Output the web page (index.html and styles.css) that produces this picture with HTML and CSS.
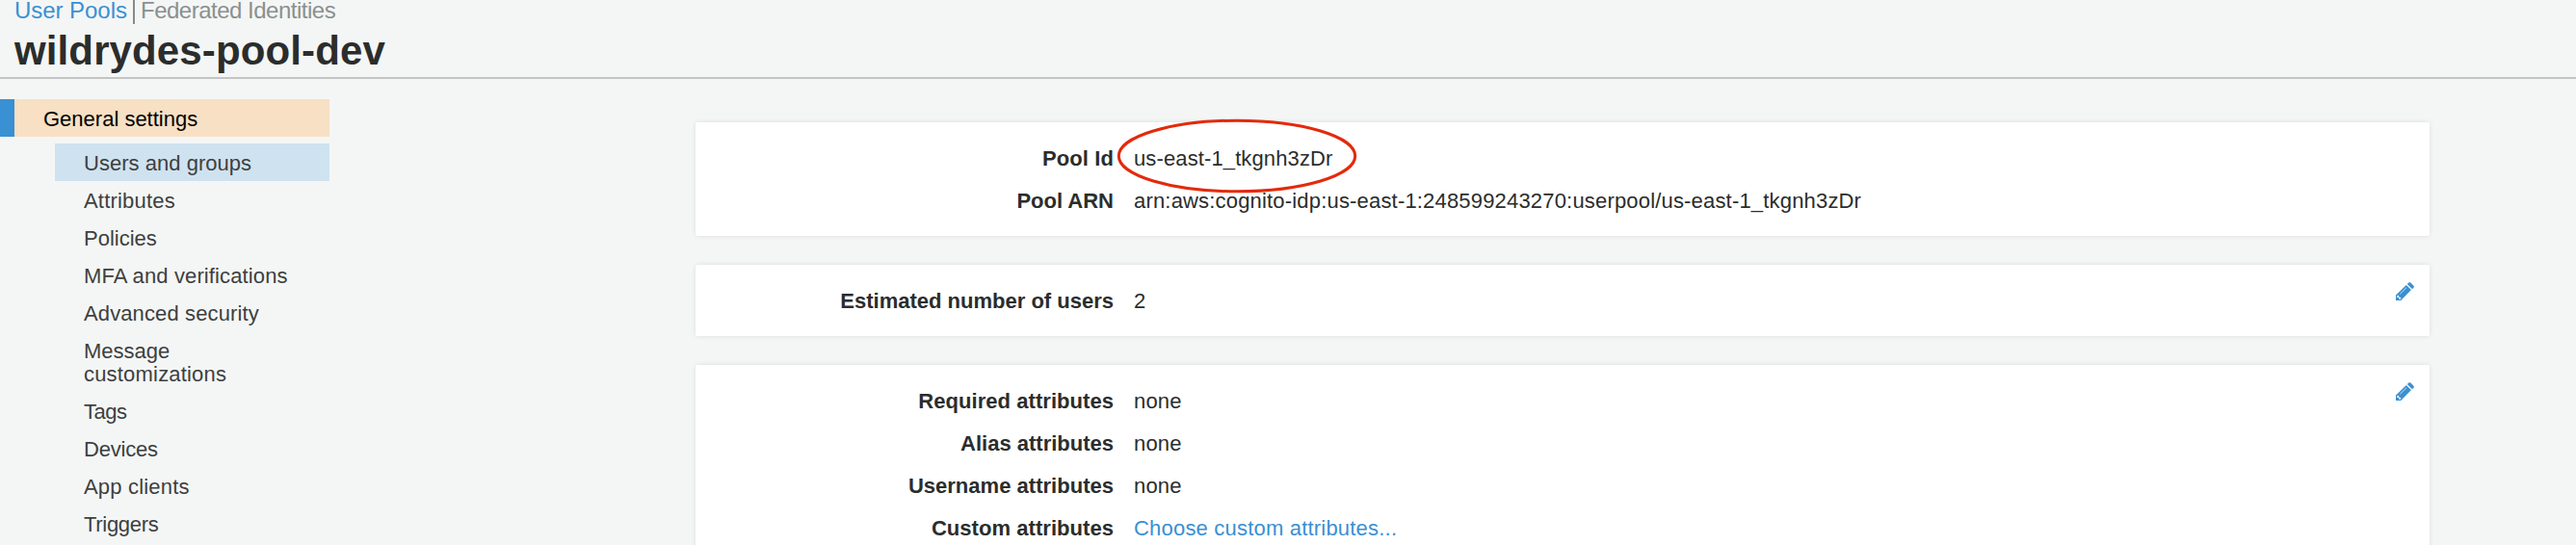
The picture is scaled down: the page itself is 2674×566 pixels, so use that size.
FILE: index.html
```
<!DOCTYPE html>
<html lang="en">
<head>
<meta charset="utf-8">
<title>wildrydes-pool-dev</title>
<link rel="stylesheet" href="styles.css">
</head>
<body>
<svg class="symbols" aria-hidden="true">
  <symbol id="pencil" viewBox="0 0 19 19">
    <path fill="currentColor" d="M0 19V13.600L10.800 2.900L16 8.100L5.200 19Z"/>
    <path fill="currentColor" d="M11.800 2L13.300.6Q14.300-.3 15.300.6L18.400 3.700Q19.300 4.700 18.400 5.700L17 7.200Z"/>
    <path fill="none" stroke="#fff" stroke-width=".7" d="M4.300 12.300L11 5.700"/>
    <path fill="#fff" d="M1.300 14.300L2.800 13.500L3.400 15.600L5.500 16.200L4.700 17.700H3.200V15.900H1.300Z"/>
  </symbol>
</svg>
<header class="header">
  <nav class="switcher">
    <a class="switch-link active">User Pools</a>
    <a class="switch-link other">Federated Identities</a>
  </nav>
  <h1 class="title">wildrydes-pool-dev</h1>
</header>
<div class="layout">
  <nav class="sidebar">
    <a class="section">General settings</a>
    <div class="items">
      <a class="item selected">Users and groups</a>
      <a class="item wide">Attributes</a>
      <a class="item">Policies</a>
      <a class="item medium">MFA and verifications</a>
      <a class="item medium">Advanced security</a>
      <a class="item message">Message <span class="wide">customizations</span></a>
      <a class="item tags">Tags</a>
      <a class="item tight">Devices</a>
      <a class="item wide">App clients</a>
      <a class="item triggers">Triggers</a>
    </div>
  </nav>
  <main class="content">
    <section class="card">
      <dl class="row"><dt class="label pool-id">Pool Id</dt><dd class="value"><span class="circled">us-east-1_tkgnh3zDr<svg class="ring" viewBox="0 0 250 78"><ellipse cx="125" cy="39" rx="122.700" ry="36.800"/></svg></span></dd></dl>
      <dl class="row"><dt class="label">Pool ARN</dt><dd class="value">arn:aws:cognito-idp:us-east-1:248599243270:userpool/us-east-1_tkgnh3zDr</dd></dl>
    </section>
    <section class="card">
      <dl class="row"><dt class="label">Estimated number of users</dt><dd class="value">2</dd></dl>
      <svg class="edit"><use href="#pencil"/></svg>
    </section>
    <section class="card">
      <dl class="row"><dt class="label required">Required attributes</dt><dd class="value">none</dd></dl>
      <dl class="row"><dt class="label">Alias attributes</dt><dd class="value">none</dd></dl>
      <dl class="row"><dt class="label username">Username attributes</dt><dd class="value">none</dd></dl>
      <dl class="row"><dt class="label required">Custom attributes</dt><dd class="value"><a class="link">Choose custom attributes...</a></dd></dl>
      <svg class="edit"><use href="#pencil"/></svg>
    </section>
  </main>
</div>
</body>
</html>
```
FILE: styles.css
```
* { box-sizing: border-box; }
body {
  margin: 0;
  height: 566px;
  overflow: hidden;
  background: #f4f6f5;
  color: #2b2d2c;
  font: 22px/24px "Liberation Sans", Arial, sans-serif;
}
.symbols { display: none; }
.header {
  height: 82px;
  padding-left: 15px;
  border-bottom: 2px solid #c2c5c4;
}
.switcher { display: flex; height: 25px; }
.switch-link { font-size: 24px; line-height: 22px; white-space: nowrap; }
.active { width: 123px; color: #3990d3; letter-spacing: -.05px; }
.other {
  padding-left: 6px;
  border-left: 2px solid #858b8b;
  color: #8a9090;
  letter-spacing: -.5px;
}
.title {
  margin: 0;
  font-size: 42px;
  line-height: 56px;
  font-weight: 700;
  letter-spacing: .12px;
}
.layout { display: flex; padding-top: 21px; }
.sidebar { width: 342px; flex: none; }
.section {
  display: block;
  height: 39px;
  padding: 9px 0 6px 30px;
  border-left: 15px solid #3990d3;
  background: #f7e0c4;
  color: #000;
}
.items { margin: 7px 0 0 57px; }
.item { display: block; padding: 9px 80px 6px 30px; color: #3d403f; white-space: nowrap; }
.selected { background: #cfe2ef; letter-spacing: .03px; }
.wide { letter-spacing: .19px; }
.medium { letter-spacing: .12px; }
.message { white-space: normal; }
.tags { letter-spacing: -.49px; }
.tight { letter-spacing: -.2px; }
.triggers { letter-spacing: -.3px; }
.content {
  display: flex;
  flex-direction: column;
  gap: 30px;
  width: 1800px;
  margin: 24px 0 0 380px;
}
.card {
  position: relative;
  padding: 16px 0 14px;
  border-radius: 2px;
  background: #fff;
  box-shadow: 0 0 5px rgba(0, 0, 0, .1);
}
.row { display: flex; gap: 21px; margin: 0; line-height: 44px; white-space: nowrap; }
.label { width: 434px; text-align: right; font-weight: 700; }
.value { margin: 0; letter-spacing: .18px; }
.pool-id { letter-spacing: .1px; }
.required { letter-spacing: .05px; }
.username { letter-spacing: .02px; }
.link { color: #3990d3; letter-spacing: .2px; }
.circled { position: relative; letter-spacing: .12px; }
.ring {
  position: absolute;
  left: -18.500px;
  top: -29.500px;
  width: 250px;
  height: 78px;
  fill: none;
  stroke: #e32a0c;
  stroke-width: 3px;
}
.edit {
  position: absolute;
  top: 18px;
  right: 16px;
  width: 19px;
  height: 19px;
  color: #3990d3;
}
```
